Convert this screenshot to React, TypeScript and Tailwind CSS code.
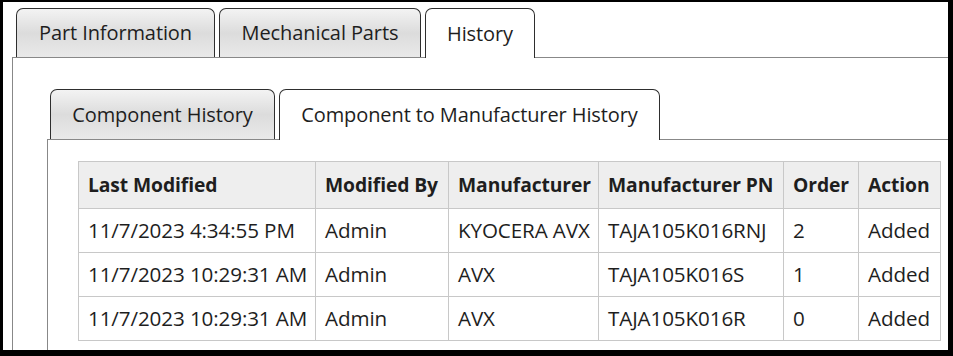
import React, { useState } from 'react';

const rows = [
  { modified: '11/7/2023 4:34:55 PM', by: 'Admin', manufacturer: 'KYOCERA AVX', pn: 'TAJA105K016RNJ', order: '2', action: 'Added' },
  { modified: '11/7/2023 10:29:31 AM', by: 'Admin', manufacturer: 'AVX', pn: 'TAJA105K016S', order: '1', action: 'Added' },
  { modified: '11/7/2023 10:29:31 AM', by: 'Admin', manufacturer: 'AVX', pn: 'TAJA105K016R', order: '0', action: 'Added' },
];

const inactiveTab =
  'flex items-center justify-center border border-b-0 border-[#2e2e2e] rounded-t-[7px] bg-linear-to-b from-[#f3f3f3] via-[#dcdcdc] to-[#e9e9e9] text-[#1e1e1e] whitespace-nowrap';
const activeTab =
  'relative z-10 -mb-px flex items-center justify-center border border-b-0 border-[#2e2e2e] rounded-t-[7px] bg-white text-[#1e1e1e] whitespace-nowrap';

export default function App() {
  const [outer, setOuter] = useState('history');
  const [inner, setInner] = useState('manufacturer');

  return (
    <div className="w-[953px] h-[356px] bg-black pt-[2px] pl-[3px] pr-[5px] pb-[6px] font-['Open_Sans',sans-serif] text-[20px] tracking-[-0.1px]">
      <div className="w-full h-full bg-white flex flex-col overflow-hidden">
        <div className="flex items-end gap-[4px] pl-[13px] pt-[6px]">
          <button onClick={() => setOuter('part')} className={`${outer === 'part' ? activeTab + ' h-[50px]' : inactiveTab + ' h-[49px]'} w-[199px]`}>
            Part Information
          </button>
          <button onClick={() => setOuter('mech')} className={`${outer === 'mech' ? activeTab + ' h-[50px]' : inactiveTab + ' h-[49px]'} w-[202px]`}>
            Mechanical Parts
          </button>
          <button onClick={() => setOuter('history')} className={`${outer === 'history' ? activeTab + ' h-[50px]' : inactiveTab + ' h-[49px]'} w-[110px]`}>
            History
          </button>
        </div>

        <div className="flex-1 ml-[9px] border-l border-t border-[#888] pt-[31px] pl-[34px]">
          <div className="flex items-end gap-[4px] pl-[3px]">
            <button onClick={() => setInner('component')} className={`${inner === 'component' ? activeTab + ' h-[51px]' : inactiveTab + ' h-[50px]'} w-[225px]`}>
              Component History
            </button>
            <button onClick={() => setInner('manufacturer')} className={`${inner === 'manufacturer' ? activeTab + ' h-[51px]' : inactiveTab + ' h-[50px]'} w-[381px]`}>
              Component to Manufacturer History
            </button>
          </div>

          <div className="h-full border-l border-t border-[#888] pl-[30px] pt-[21px]">
            <table className="w-[862px] table-fixed border-collapse text-[#1e1e1e] text-[20.6px]">
              <colgroup>
                <col className="w-[237px]" />
                <col className="w-[133px]" />
                <col className="w-[150px]" />
                <col className="w-[185px]" />
                <col className="w-[75px]" />
                <col className="w-[82px]" />
              </colgroup>
              <thead>
                <tr className="h-[47px] bg-[#eeeeee]">
                  {['Last Modified', 'Modified By', 'Manufacturer', 'Manufacturer PN', 'Order', 'Action'].map(h => (
                    <th key={h} className="border border-[#c8c8c8] px-[9px] text-left font-bold whitespace-nowrap text-[19.3px]">
                      {h}
                    </th>
                  ))}
                </tr>
              </thead>
              <tbody>
                {rows.map((r, i) => (
                  <tr key={i} className="h-[44px]">
                    <td className="border border-[#c8c8c8] px-[9px] whitespace-nowrap">{r.modified}</td>
                    <td className="border border-[#c8c8c8] px-[9px] whitespace-nowrap">{r.by}</td>
                    <td className="border border-[#c8c8c8] px-[9px] whitespace-nowrap">{r.manufacturer}</td>
                    <td className="border border-[#c8c8c8] px-[9px] whitespace-nowrap">{r.pn}</td>
                    <td className="border border-[#c8c8c8] px-[9px] whitespace-nowrap">{r.order}</td>
                    <td className="border border-[#c8c8c8] px-[9px] whitespace-nowrap">{r.action}</td>
                  </tr>
                ))}
              </tbody>
            </table>
          </div>
        </div>
      </div>
    </div>
  );
}
